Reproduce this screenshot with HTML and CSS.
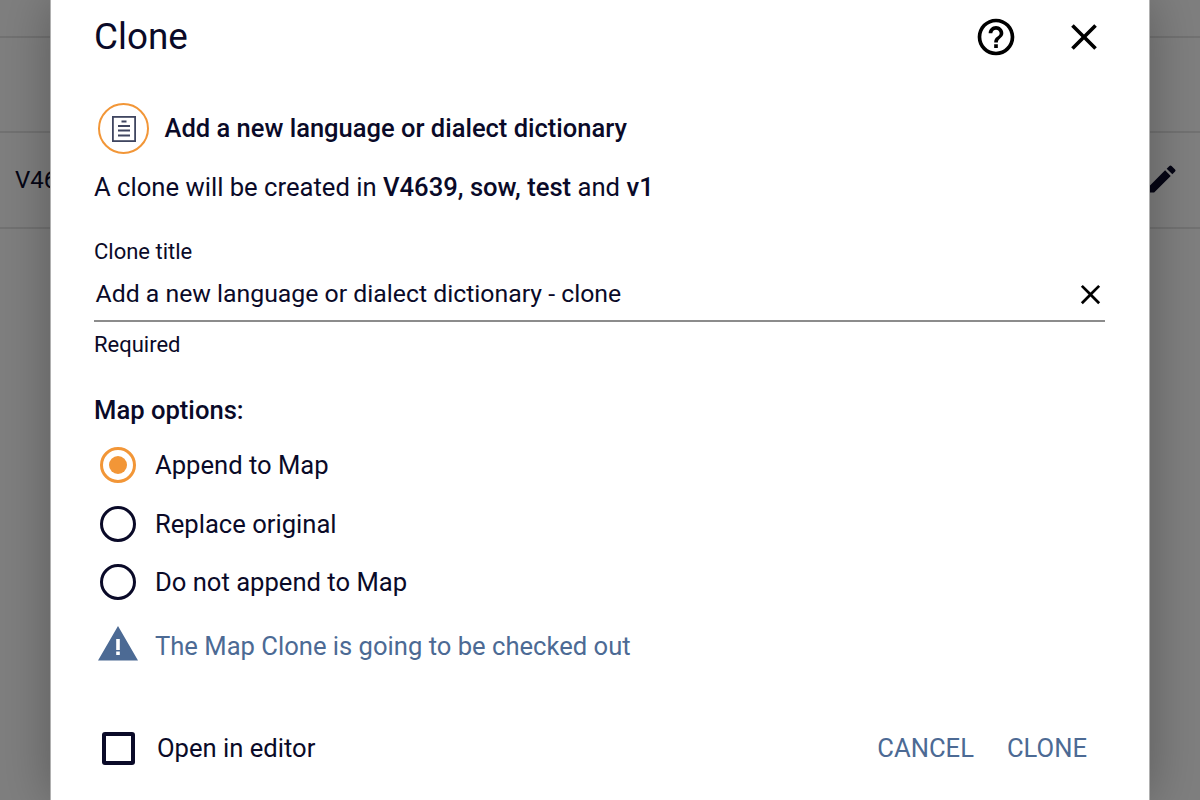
FILE: index.html
```html
<!DOCTYPE html>
<html lang="en">
<head>
<meta charset="utf-8">
<title>Clone</title>
<link rel="stylesheet" href="styles.css">
</head>
<body>
<div class="page">
  <div class="bg-row bg-row-top"></div>
  <div class="bg-row bg-row-mid"></div>
  <div class="bg-row bg-row-main">
    <span class="bg-id">V4639</span>
    <svg class="bg-edit" viewBox="0 0 24 24" width="36" height="36"><path d="M3 17.25V21h3.75L17.81 9.94l-3.75-3.75L3 17.25zM20.71 7.04a1 1 0 0 0 0-1.41l-2.34-2.34a1 1 0 0 0-1.41 0l-1.83 1.83 3.75 3.75 1.83-1.83z"/></svg>
  </div>
</div>
<div class="modal">
  <header class="modal-head">
    <h1 class="modal-title">Clone</h1>
    <div class="head-icons">
      <svg class="icon-help" viewBox="0 0 24 24" width="44" height="44"><path d="M11 18h2v-2h-2v2zm1-16C6.48 2 2 6.48 2 12s4.48 10 10 10 10-4.48 10-10S17.52 2 12 2zm0 18c-4.41 0-8-3.59-8-8s3.59-8 8-8 8 3.59 8 8-3.59 8-8 8zm0-14c-2.21 0-4 1.79-4 4h2c0-1.1.9-2 2-2s2 .9 2 2c0 2-3 1.75-3 5h2c0-2.25 3-2.5 3-5 0-2.21-1.79-4-4-4z"/></svg>
      <svg class="icon-close" viewBox="0 0 24 24" width="44" height="44"><path d="M19 6.41 17.59 5 12 10.59 6.41 5 5 6.41 10.59 12 5 17.59 6.41 19 12 13.41 17.59 19 19 17.59 13.41 12z"/></svg>
    </div>
  </header>
  <div class="item">
    <span class="item-badge">
      <svg viewBox="0 0 24 26" width="24" height="26" fill="none" stroke="#3f4560"><rect x="0.9" y="0.9" width="22.2" height="24.2" stroke-width="1.8"/><path d="M9.5 5.5h5M6 10h12M6 14.5h12M6 19.500h12" stroke-width="2"/></svg>
    </span>
    <span class="item-name">Add a new language or dialect dictionary</span>
  </div>
  <p class="info">A clone will be created in <b>V4639, sow, test</b> and <b>v1</b></p>
  <div class="field">
    <label class="field-label">Clone title</label>
    <div class="field-input">
      <span class="field-value">Add a new language or dialect dictionary - clone</span>
      <svg viewBox="0 0 24 24" width="33" height="33" class="field-clear"><path d="M19 6.410 17.59 5 12 10.590 6.410 5 5 6.410 10.590 12 5 17.590 6.410 19 12 13.410 17.590 19 19 17.590 13.410 12z"/></svg>
    </div>
    <div class="field-help">Required</div>
  </div>
  <div class="options-title">Map options:</div>
  <div class="options">
    <div class="option"><span class="radio radio-on"></span><span>Append to Map</span></div>
    <div class="option"><span class="radio"></span><span>Replace original</span></div>
    <div class="option"><span class="radio"></span><span>Do not append to Map</span></div>
  </div>
  <div class="warning">
    <svg class="warning-icon" viewBox="0 0 40 36" width="40" height="36"><path fill="#4c6a94" fill-rule="evenodd" d="M20 0 40 34.500H0L20 0zM18.200 13v11h3.600V13h-3.600zm0 12.500V29h3.600v-3.500h-3.600z"/></svg>
    <span>The Map Clone is going to be checked out</span>
  </div>
  <footer class="modal-foot">
    <div class="check"><span class="checkbox"></span><span>Open in editor</span></div>
    <div class="actions"><span class="btn">CANCEL</span><span class="btn">CLONE</span></div>
  </footer>
</div>
</body>
</html>
```
FILE: styles.css
```css
* { box-sizing: border-box; }
html, body { margin: 0; height: 100%; overflow: hidden; }
body {
  position: relative;
  width: 1200px;
  height: 800px;
  background: #7f7f7f;
  color: #0a0a28;
  font-family: Roboto, "Liberation Sans", sans-serif;
}
.page { height: 800px; }
.bg-row { border-bottom: 2px solid rgba(0,0,0,.1); }
.bg-row-top { height: 38px; }
.bg-row-mid { height: 95px; }
.bg-row-main {
  height: 96px;
  display: flex;
  align-items: center;
  justify-content: space-between;
  padding: 0 20px 0 15px;
  font-size: 24px;
  color: #050514;
}
.bg-edit { fill: #050514; margin-top: -2px; }
.modal {
  position: absolute;
  left: 51px;
  top: 0;
  width: 1098px;
  height: 800px;
  background: #fff;
  padding: 0 44px 0 43px;
  box-shadow: 0 0 0 1px #b0b0b0, 0 0 50px rgba(0,0,0,.3);
}
.modal-head {
  display: flex;
  justify-content: space-between;
  align-items: center;
  height: 74px;
}
.modal-title { margin: 0; font-size: 36.800px; font-weight: 400; line-height: 72px; }
.head-icons { display: flex; gap: 44px; margin-right: -1px; }
.item { display: flex; align-items: center; gap: 16px; margin-top: 29px; margin-left: 4px; }
.item-badge {
  width: 51px; height: 51px;
  border: 2px solid #f29637;
  border-radius: 50%;
  display: flex; align-items: center; justify-content: center;
}
.item-name { font-size: 25.500px; font-weight: 500; padding-bottom: 2px; margin-left: -0.5px; }
.info { margin: 15px 0 0; font-size: 25.640px; line-height: 36px; }
.info b { font-weight: 500; }
.field { margin-top: 32px; }
.field-label { display: block; font-size: 22px; line-height: 30px; }
.field-input {
  display: flex; align-items: center; justify-content: space-between;
  height: 55px;
  border-bottom: 2px solid #8c8c8c;
  font-size: 24.800px;
  padding: 0 0 0 1.500px;
}
.field-clear { margin: 2px -2px 0 0; }
.field-help { font-size: 22px; line-height: 30px; margin-top: 8px; }
.options-title { margin-top: 32px; font-size: 25.600px; font-weight: 500; line-height: 36px; }
.options { margin-top: 8px; margin-left: 6px; }
.option { display: flex; align-items: center; gap: 19px; height: 58.500px; font-size: 25.600px; }
.radio { width: 36px; height: 36px; border: 3.500px solid #0a0a28; border-radius: 50%; flex: none; }
.radio-on { border-color: #f29637; position: relative; }
.radio-on::after { content: ""; position: absolute; inset: 6px; border-radius: 50%; background: #f29637; }
.warning { display: flex; align-items: center; gap: 17px; margin-top: 17px; margin-left: 4px; font-size: 25.600px; color: #4c6a94; }
.warning-icon { margin: -3px 0 1px; flex: none; }
.modal-foot { display: flex; justify-content: space-between; align-items: center; margin-top: 69px; }
.check { display: flex; align-items: center; gap: 22px; font-size: 25.600px; margin-left: 8px; }
.checkbox { width: 33px; height: 33px; border: 4px solid #0a0a28; border-radius: 3px; flex: none; }
.actions { display: flex; gap: 33px; margin-right: 18px; }
.btn { font-size: 25.600px; color: #4c6a94; }
```
